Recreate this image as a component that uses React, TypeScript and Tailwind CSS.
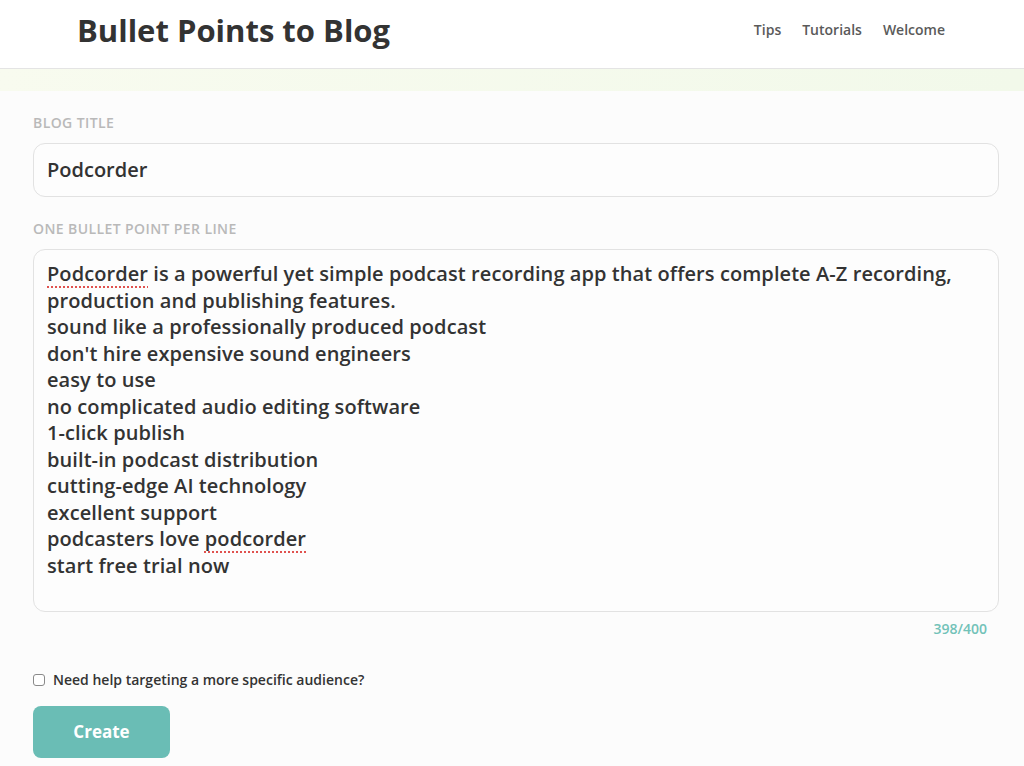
const BULLETS = [
  'sound like a professionally produced podcast',
  "don't hire expensive sound engineers",
  'easy to use',
  'no complicated audio editing software',
  '1-click publish',
  'built-in podcast distribution',
  'cutting-edge AI technology',
  'excellent support',
];

function Misspelled({ children }: { children: string }) {
  return (
    <span className="underline decoration-dotted decoration-[#e0524f] decoration-2 underline-offset-[5px]">
      {children}
    </span>
  );
}

export default function App() {
  return (
    <div className="min-h-[766px] bg-[#fcfcfc] text-[#333] font-['Open_Sans','Liberation_Sans',sans-serif]">
      {/* Header */}
      <header className="h-[69px] bg-white border-b border-[#e4e4e4] flex items-center justify-between pl-[77px] pr-[79px]">
        <h1 className="text-[31px] font-bold tracking-[0px] text-[#333] leading-none -mt-[8px]">Bullet Points to Blog</h1>
        <nav className="flex gap-[21px] text-[14px] font-semibold text-[#5a5a5a] -mt-[10px]">
          <a>Tips</a>
          <a>Tutorials</a>
          <a>Welcome</a>
        </nav>
      </header>
      <div className="h-[22px] bg-gradient-to-r from-[#f8fbef] to-[#f2f9ea]" />

      {/* Form */}
      <main className="pl-[33px] pr-[25px] pt-[25px]">
        <label className="block text-[14px] tracking-[0.4px] font-semibold uppercase text-[#b9b9b9] leading-none">
          Blog title
        </label>
        <div className="mt-[13px] h-[54px] rounded-[12px] border border-[#e2e2e2] bg-[#fdfdfd] flex items-center px-[13px] text-[20px] font-semibold text-[#333]">
          Podcorder
        </div>

        <label className="block mt-[25px] text-[14px] tracking-[0.4px] font-semibold uppercase text-[#b9b9b9] leading-none">
          One bullet point per line
        </label>
        <div className="mt-[13px] h-[363px] rounded-[12px] border border-[#e2e2e2] bg-[#fdfdfd] px-[13px] pt-[11px] text-[20px] tracking-[0.08px] font-semibold leading-[26.5px] text-[#333]">
          <div>
            <Misspelled>Podcorder</Misspelled> is a powerful yet simple podcast recording app that offers complete A-Z recording,
          </div>
          <div>production and publishing features.</div>
          {BULLETS.map(line => (
            <div key={line}>{line}</div>
          ))}
          <div>
            podcasters love <Misspelled>podcorder</Misspelled>
          </div>
          <div>start free trial now</div>
        </div>
        <div className="mt-[10px] pr-[12px] text-right text-[14px] font-semibold text-[#72c2b8] leading-none">398/400</div>

        <label className="mt-[33px] flex items-center gap-[8px] text-[14px] font-semibold text-[#333]">
          <span className="w-[12px] h-[12px] rounded-[3px] border border-[#8a8a8a] bg-white" />
          Need help targeting a more specific audience?
        </label>

        <button className="mt-[16px] w-[137px] h-[52px] rounded-[8px] bg-[#6abdb5] text-white text-[17px] font-bold">
          Create
        </button>
      </main>
    </div>
  );
}
